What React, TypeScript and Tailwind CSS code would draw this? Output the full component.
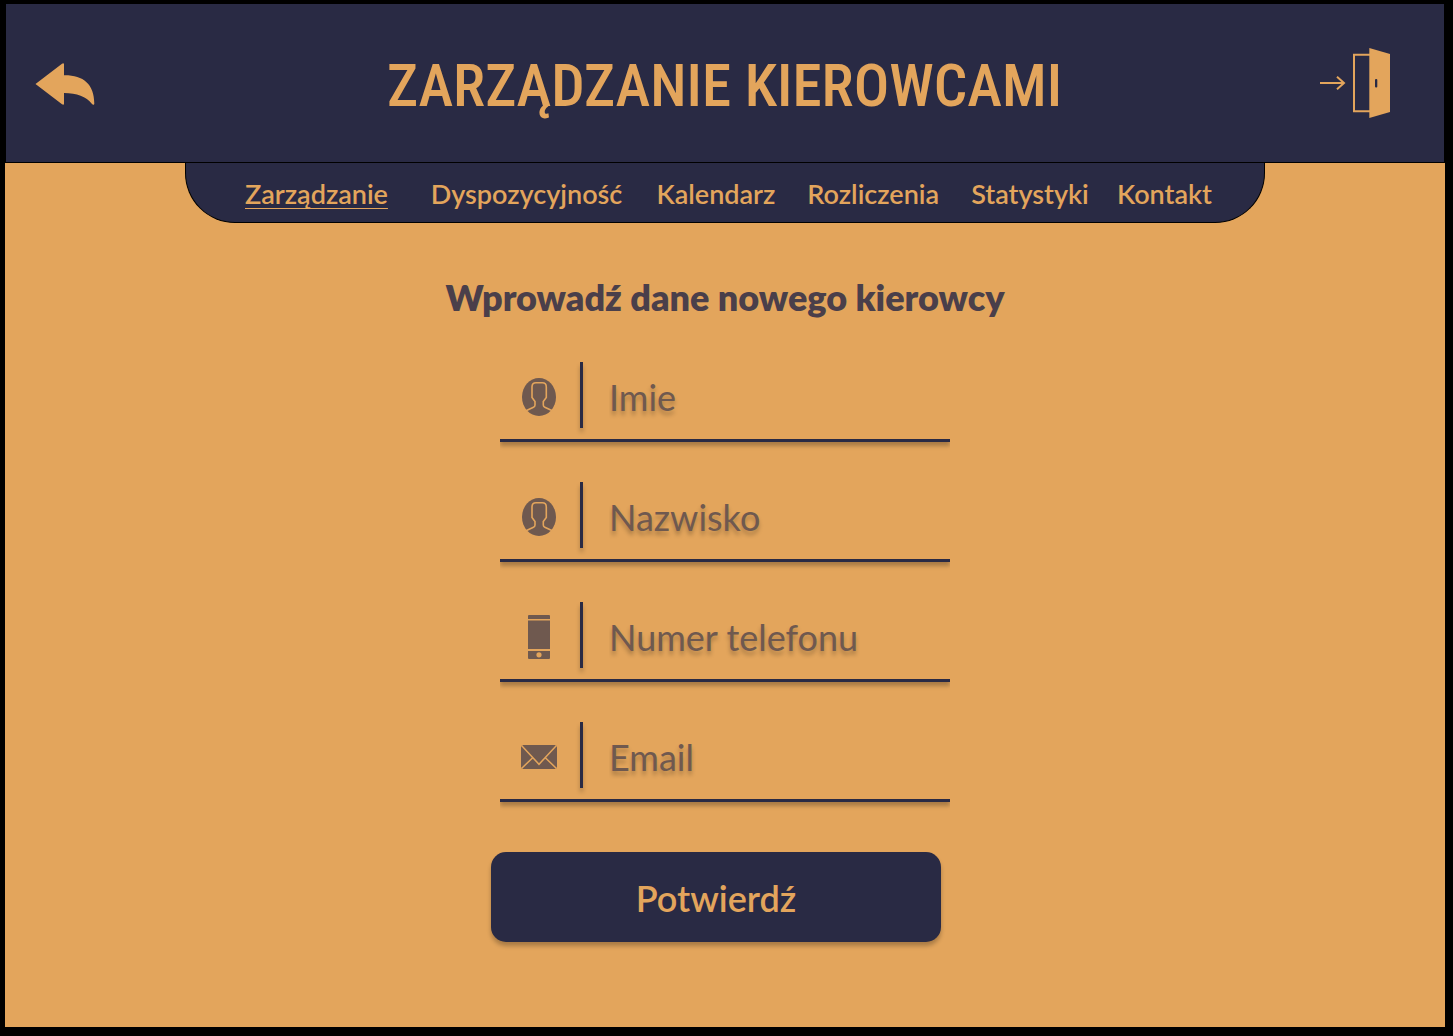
import type { ReactNode } from "react";

const navItems = ["Zarządzanie", "Dyspozycyjność", "Kalendarz", "Rozliczenia", "Statystyki", "Kontakt"];

function BackIcon() {
  return (
    <svg width="60" height="42" viewBox="0 0 60 42" fill="currentColor" aria-hidden="true">
      <path d="M.5 21 27 .7Q29-.3 29 1.5V12.3C48 12 59.3 21 59.3 40.5 59.3 42 58 42.3 57 41 51 33.5 42 30 29 30V40.5Q29 42.5 27 41.3Z" />
    </svg>
  );
}

function ExitIcon() {
  return (
    <svg width="70" height="70" viewBox="0 0 70 70" fill="none" stroke="currentColor" strokeWidth="2" aria-hidden="true">
      <path d="M0 35H24M17 28.700 24 35 17 41.300" />
      <path d="M50 6.700H34V63.300H50" />
      <path d="M49.300 0 70 6V64L49.300 70Z" fill="currentColor" stroke="none" />
      <rect x="55" y="31" width="2.300" height="8.500" rx="1" fill="#292a44" stroke="none" />
    </svg>
  );
}

function PersonIcon() {
  return (
    <svg width="34" height="38" viewBox="0 0 34 38" aria-hidden="true">
      <ellipse cx="17" cy="19" rx="17" ry="19" fill="currentColor" />
      <path
        d="M4 32.700 11.500 29.300Q13 28.600 13 27V23.500L10 19.500V9Q10 4.800 14 4.800H20.300Q24.300 4.800 24.300 9V19.500L21.300 23.500V27Q21.300 28.600 22.800 29.300L30.300 32.700"
        fill="none"
        stroke="#e3a55c"
        strokeWidth="1.600"
      />
    </svg>
  );
}

function PhoneIcon() {
  return (
    <svg width="22" height="44" viewBox="0 0 22 44" fill="currentColor" aria-hidden="true">
      <path d="M1 0H21Q22 0 22 1V4H0V1Q0 0 1 0Z" />
      <path d="M0 5.500H22V34H0Z" />
      <path fillRule="evenodd" d="M0 36H22V43Q22 44 21 44H1Q0 44 0 43ZM11 37.200A2.600 2.600 0 1 0 11 42.400 2.600 2.600 0 1 0 11 37.200Z" />
    </svg>
  );
}

function MailIcon() {
  return (
    <svg width="36" height="24" viewBox="0 0 36 24" aria-hidden="true">
      <rect width="36" height="24" rx="2.500" fill="currentColor" />
      <path d="M.5.500 18 19.300 35.500.500M.5 23.500 11.700 12.700M35.500 23.500 24.300 12.700" fill="none" stroke="#e3a55c" strokeWidth="1.500" />
    </svg>
  );
}

const fields: { id: string; label: string; type: string; icon: ReactNode }[] = [
  { id: "first-name", label: "Imie", type: "text", icon: <PersonIcon /> },
  { id: "last-name", label: "Nazwisko", type: "text", icon: <PersonIcon /> },
  { id: "phone", label: "Numer telefonu", type: "tel", icon: <PhoneIcon /> },
  { id: "email", label: "Email", type: "email", icon: <MailIcon /> },
];

export default function App() {
  return (
    <div className="flex min-h-screen flex-col bg-black pt-[3px] pr-2 pb-[9px] pl-[5px] font-['Lato','Noto_Sans',sans-serif]">
      <header className="grid h-40 grid-cols-[70px_1fr_70px] items-center border border-black bg-[#292a44] pr-[54px] pl-[29px] text-[#e3a55c]">
        <button type="button" aria-label="Wstecz" className="justify-self-start pt-0.5">
          <BackIcon />
        </button>
        <h1 className="pt-1 pl-6 text-center font-['Roboto_Condensed','Roboto',sans-serif] text-[59px] leading-none font-medium">
          ZARZĄDZANIE KIEROWCAMI
        </h1>
        <button type="button" aria-label="Wyloguj" className="justify-self-end">
          <ExitIcon />
        </button>
      </header>

      <main className="flex flex-1 flex-col items-center bg-[#e3a55c]">
        <nav className="grid h-[60px] w-3/4 grid-cols-[186fr_226fr_151fr_164fr_146fr_94fr] items-center rounded-b-[50px] border border-t-0 border-black bg-[#292a44] pt-1 pr-[52px] pl-[59px] text-[27px] font-semibold text-[#e3a55c]">
          {navItems.map((item, i) => (
            <a
              key={item}
              href="#"
              aria-current={i === 0 ? "page" : undefined}
              className="whitespace-nowrap aria-[current=page]:underline aria-[current=page]:decoration-1 aria-[current=page]:underline-offset-4"
            >
              {item}
            </a>
          ))}
        </nav>

        <h2 className="mt-[50px] text-[36px] leading-[48px] font-extrabold text-[#4a3f4a]">Wprowadź dane nowego kierowcy</h2>

        <form className="mt-[41px] flex flex-col items-center" onSubmit={(e) => e.preventDefault()}>
          <div className="flex w-[450px] flex-col gap-10">
            {fields.map((f) => (
              <div
                key={f.id}
                className="flex h-20 items-start border-b-[3px] border-[#292a44] text-[#6f594f] shadow-[0_4px_4px_rgba(0,0,0,0.25)] [clip-path:inset(0_0_-12px_0)]"
              >
                <label htmlFor={f.id} className="flex h-[69px] w-20 items-center justify-center pr-0.5">
                  {f.icon}
                </label>
                <span className="h-[66px] w-[3px] bg-[#292a44] shadow-[0_4px_4px_rgba(0,0,0,0.25)]" />
                <input
                  id={f.id}
                  type={f.type}
                  aria-label={f.label}
                  placeholder={f.label}
                  className="h-[70px] min-w-0 flex-1 bg-transparent pl-[26px] text-[36px] outline-none placeholder:text-[#6f594f] [text-shadow:0_4px_4px_rgba(0,0,0,0.25)]"
                />
              </div>
            ))}
          </div>
          <button
            type="submit"
            className="mt-[50px] mr-[18px] h-[90px] w-[450px] rounded-[15px] bg-[#292a44] pt-0.5 text-[36px] font-semibold text-[#e3a55c] shadow-[0_4px_4px_rgba(0,0,0,0.25)]"
          >
            Potwierdź
          </button>
        </form>
      </main>
    </div>
  );
}
